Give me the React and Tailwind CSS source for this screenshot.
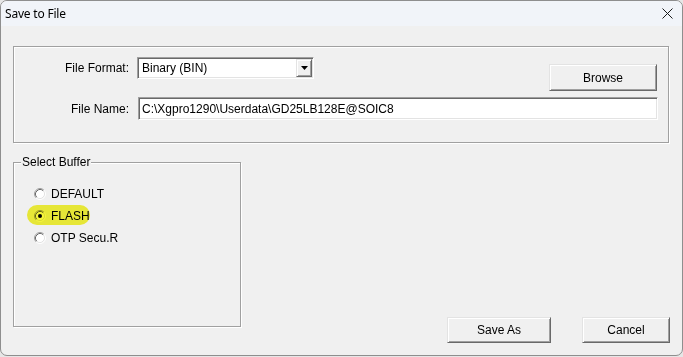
import React from "react";

function Radio({ checked }) {
  return (
    <svg width="12" height="12" viewBox="0 0 12 12" className="shrink-0">
      <circle cx="6" cy="6" r="4.5" fill="#ffffff" />
      <path d="M2.11 9.89 A5.5 5.5 0 0 1 9.89 2.11" stroke="#a0a0a0" strokeWidth="1" fill="none" />
      <path d="M9.89 2.11 A5.5 5.5 0 0 1 2.11 9.89" stroke="#ffffff" strokeWidth="1" fill="none" />
      <path d="M2.82 9.18 A4.5 4.5 0 0 1 9.18 2.82" stroke="#696969" strokeWidth="1" fill="none" />
      <path d="M9.18 2.82 A4.5 4.5 0 0 1 2.82 9.18" stroke="#e3e3e3" strokeWidth="1" fill="none" />
      {checked && <circle cx="6" cy="6" r="2" fill="#000000" />}
    </svg>
  );
}

const raised =
  "flex items-center justify-center bg-[#f0f0f0] border border-t-[#e3e3e3] border-l-[#e3e3e3] border-r-[#696969] border-b-[#696969] shadow-[inset_1px_1px_0_#ffffff,inset_-1px_-1px_0_#a0a0a0]";
const sunken =
  "bg-white border border-t-[#a0a0a0] border-l-[#a0a0a0] border-r-white border-b-white shadow-[inset_1px_1px_0_#696969,inset_-1px_-1px_0_#e3e3e3]";
const etched =
  "border border-[#a0a0a0] shadow-[inset_1px_1px_0_#ffffff,1px_1px_0_#ffffff]";

export default function App() {
  return (
    <div className="w-[683px] h-[357px] bg-[#e6e6e6] font-['Liberation_Sans',Arial,sans-serif] text-[12px] text-black">
      <div className="w-[683px] h-[356px] flex flex-col border border-[#8e8e8e] rounded-[7px] overflow-hidden bg-[#f0f0f0]">
        <div className="h-[25px] shrink-0 flex items-center justify-between bg-[#f1f4f9] pl-[4px] pr-[9px]">
          <span className="font-['Noto_Sans',sans-serif] text-[12px] tracking-[-0.2px] leading-none text-black">Save to File</span>
          <svg width="11" height="11" viewBox="0 0 11 11">
            <path d="M0.5 0.5 L10.5 10.5 M10.5 0.5 L0.5 10.5" stroke="#1a1a1a" strokeWidth="1" />
          </svg>
        </div>
        <div className="flex flex-col px-[12px] pt-[20px]">
          <div className={"w-[656px] h-[97px] pt-[10px] " + etched}>
            <div className="flex items-start">
              <div className="w-[115px] h-[22px] flex items-center justify-end">File Format:</div>
              <div className={"ml-[8px] w-[177px] h-[22px] flex items-center pl-[4px] pr-[1px] " + sunken}>
                <span className="flex-1 leading-none">Binary (BIN)</span>
                <div className={"w-[16px] h-[18px] " + raised}>
                  <svg width="7" height="4" viewBox="0 0 7 4">
                    <path d="M0 0 H7 L3.5 4 Z" fill="#000" />
                  </svg>
                </div>
              </div>
              <div className={"ml-auto mr-[11px] mt-[7px] w-[108px] h-[27px] " + raised}>Browse</div>
            </div>
            <div className="flex items-start mt-[6px]">
              <div className="w-[115px] h-[23px] flex items-center justify-end">File Name:</div>
              <div className={"ml-[9px] w-[520px] h-[23px] flex items-center pl-[3px] " + sunken}>
                C:\Xgpro1290\Userdata\GD25LB128E@SOIC8
              </div>
            </div>
          </div>
          <div className="flex items-start mt-[19px]">
            <div className={"relative w-[228px] h-[165px] pt-[20px] " + etched}>
              <div className="absolute -top-[8px] left-[7px] px-[1px] bg-[#f0f0f0] leading-[14px]">Select Buffer</div>
              <div className="absolute left-[13px] top-[42px] w-[63px] h-[20px] rounded-[10px] bg-[#f5f53a] mix-blend-multiply blur-[0.6px] pointer-events-none z-10"></div>
              <div className="flex flex-col pl-[20px]">
                <div className="h-[22px] flex items-center"><Radio /><span className="ml-[5px]">DEFAULT</span></div>
                <div className="h-[22px] flex items-center"><Radio checked /><span className="ml-[5px]">FLASH</span></div>
                <div className="h-[22px] flex items-center"><Radio /><span className="ml-[5px]">OTP Secu.R</span></div>
              </div>
            </div>
            <div className="ml-auto mt-[155px] flex gap-[31px]">
              <div className={"w-[104px] h-[26px] " + raised}>Save As</div>
              <div className={"w-[88px] h-[26px] " + raised}>Cancel</div>
            </div>
          </div>
        </div>
      </div>
    </div>
  );
}
